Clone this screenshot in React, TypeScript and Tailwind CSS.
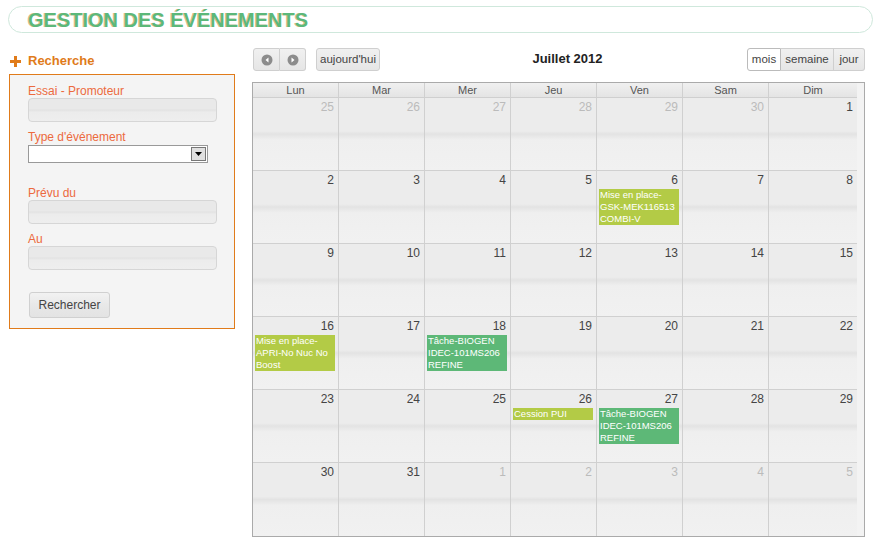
import React from "react";

type Ev = { label: string; color: "lime" | "green" };
type Day = { n: number; other?: boolean; ev?: Ev };

const weeks: Day[][] = [
  [{ n: 25, other: true }, { n: 26, other: true }, { n: 27, other: true }, { n: 28, other: true }, { n: 29, other: true }, { n: 30, other: true }, { n: 1 }],
  [{ n: 2 }, { n: 3 }, { n: 4 }, { n: 5 }, { n: 6, ev: { label: "Mise en place-GSK-MEK116513 COMBI-V", color: "lime" } }, { n: 7 }, { n: 8 }],
  [{ n: 9 }, { n: 10 }, { n: 11 }, { n: 12 }, { n: 13 }, { n: 14 }, { n: 15 }],
  [{ n: 16, ev: { label: "Mise en place-APRI-No Nuc No Boost", color: "lime" } }, { n: 17 }, { n: 18, ev: { label: "Tâche-BIOGEN IDEC-101MS206 REFINE", color: "green" } }, { n: 19 }, { n: 20 }, { n: 21 }, { n: 22 }],
  [{ n: 23 }, { n: 24 }, { n: 25 }, { n: 26, ev: { label: "Cession PUI", color: "lime" } }, { n: 27, ev: { label: "Tâche-BIOGEN IDEC-101MS206 REFINE", color: "green" } }, { n: 28 }, { n: 29 }],
  [{ n: 30 }, { n: 31 }, { n: 1, other: true }, { n: 2, other: true }, { n: 3, other: true }, { n: 4, other: true }, { n: 5, other: true }],
];

const days = ["Lun", "Mar", "Mer", "Jeu", "Ven", "Sam", "Dim"];

function Field({ label }: { label: string }) {
  return (
    <div className="flex flex-col">
      <label className="text-[12px] leading-[14px] text-[#ec6a3e]">{label}</label>
      <div className="h-[24px] w-[189px] rounded-[4px] border border-[#d6d6d6] bg-[linear-gradient(to_bottom,#e9e9e9_0%,#e9e9e9_45%,#e2e2e2_50%,#ececec_60%,#eeeeee_100%)]" />
    </div>
  );
}

function Circle({ dir }: { dir: "l" | "r" }) {
  return (
    <svg width="12" height="12" viewBox="0 0 12 12">
      <circle cx="6" cy="6" r="5.5" fill="#8c8c8c" />
      {dir === "l" ? <path d="M7.5 3.5 L4.5 6 L7.5 8.5 Z" fill="#fff" /> : <path d="M4.5 3.5 L7.5 6 L4.5 8.5 Z" fill="#fff" />}
    </svg>
  );
}

const base = "h-[23px] flex items-center justify-center border text-[11.5px] text-[#444]";
const btn = `${base} border-[#cfcfcf] bg-[linear-gradient(to_bottom,#f0f0f0_0%,#e6e6e6_100%)]`;

export default function App() {
  return (
    <div className="min-h-screen bg-white font-['Liberation_Sans',Arial,sans-serif]">
      {/* titre */}
      <div className="pt-[6px] px-[8px]">
        <div className="h-[27px] rounded-full border border-[#cfe8dc] flex items-center pl-[19px]">
          <h1 className="text-[20px] font-bold text-[#5cb87a] [text-shadow:-1px_0_0_#e9b98a]">GESTION DES ÉVÉNEMENTS</h1>
        </div>
      </div>

      <div className="flex mt-[21px]">
        {/* recherche */}
        <div className="ml-[9px] w-[226px]">
          <div className="flex items-center h-[14px] pl-[1px]">
            <svg width="11" height="11" viewBox="0 0 11 11"><path d="M4 0 H7 V4 H11 V7 H7 V11 H4 V7 H0 V4 H4 Z" fill="#e07b1a" /></svg>
            <span className="ml-[7px] text-[13px] font-bold text-[#e07b1a]">Recherche</span>
          </div>
          <div className="mt-[6px] h-[255px] border border-[#e07b1a] bg-[#f4f4f4] pl-[18px] pt-[9px]">
            <Field label="Essai - Promoteur" />
            <div className="mt-[8px] flex flex-col">
              <label className="text-[12px] leading-[14px] text-[#ec6a3e]">Type d'événement</label>
              <div className="mt-[1px] h-[18px] w-[180px] border border-[#999] bg-white flex justify-end items-center p-[1px]">
                <div className="h-[14px] w-[15px] bg-[#e0e0e0] border border-[#777] flex items-center justify-center">
                  <svg width="7" height="4" viewBox="0 0 7 4"><path d="M0 0 H7 L3.5 4 Z" fill="#000" /></svg>
                </div>
              </div>
            </div>
            <div className="mt-[23px]">
              <Field label="Prévu du" />
            </div>
            <div className="mt-[8px]">
              <Field label="Au" />
            </div>
            <button className="mt-[22px] ml-[1px] h-[26px] w-[81px] rounded-[3px] border border-[#d0d0d0] bg-[linear-gradient(to_bottom,#f2f2f2_0%,#e8e8e8_50%,#e3e3e3_100%)] text-[12px] text-[#444]">
              Rechercher
            </button>
          </div>
        </div>

        {/* calendrier */}
        <div className="ml-[17px] w-[613px] -mt-[6px]">
          <div className="relative h-[34px] flex items-start">
            <div className="flex ml-[1px]">
              <div className={`${btn} w-[27px] rounded-l-[3px]`}><Circle dir="l" /></div>
              <div className={`${btn} w-[26px] rounded-r-[3px] border-l-0`}><Circle dir="r" /></div>
            </div>
            <div className={`${btn} ml-[10px] w-[64px] rounded-[3px]`}>aujourd'hui</div>
            <div className="flex-1 text-center text-[13px] font-bold text-[#222] pt-[1px] pl-[8px]">Juillet 2012</div>
            <div className="flex">
              <div className={`${base} w-[34px] rounded-l-[3px] bg-white border-[#bbb]`}>mois</div>
              <div className={`${btn} w-[53px] border-l-0`}>semaine</div>
              <div className={`${btn} w-[31px] border-l-0 rounded-r-[3px]`}>jour</div>
            </div>
          </div>

          <div className="border border-[#aaa] flex bg-[#f3f3f3]">
            <div className="w-[604px]">
              <div className="grid grid-cols-[86px_86px_86px_86px_86px_86px_88px] h-[15px] border-b border-[#cfcfcf] bg-[linear-gradient(to_bottom,#f0f0f0_0%,#e4e4e4_100%)]">
                {days.map((d, i) => (
                  <div key={d} className={`text-center text-[11px] leading-[14px] text-[#555] ${i < 6 ? "border-r border-[#d0d0d0]" : ""}`}>{d}</div>
                ))}
              </div>
              {weeks.map((w, wi) => (
                <div key={wi} className={`grid grid-cols-[86px_86px_86px_86px_86px_86px_88px] h-[73px] ${wi < 5 ? "border-b border-[#d0d0d0]" : ""}`}>
                  {w.map((d, di) => (
                    <div
                      key={di}
                      className={`flex flex-col bg-[linear-gradient(to_bottom,#ececec_0%,#ececec_46%,#e3e3e3_50%,#efefef_58%,#f1f1f1_100%)] ${di < 6 ? "border-r border-[#d0d0d0]" : ""}`}
                    >
                      <div className={`text-right pr-[4px] pt-[2px] text-[12px] leading-[14px] ${d.other ? "text-[#bbb]" : "text-[#444]"}`}>{d.n}</div>
                      {d.ev && (
                        <div
                          className={`mt-[2px] mx-[2px] w-[80px] px-[1px] text-[9.5px] leading-[12px] text-white ${d.ev.color === "lime" ? "bg-[#b3cb46]" : "bg-[#5db877]"}`}
                        >
                          {d.ev.label}
                        </div>
                      )}
                    </div>
                  ))}
                </div>
              ))}
            </div>
          </div>
        </div>
      </div>
    </div>
  );
}
